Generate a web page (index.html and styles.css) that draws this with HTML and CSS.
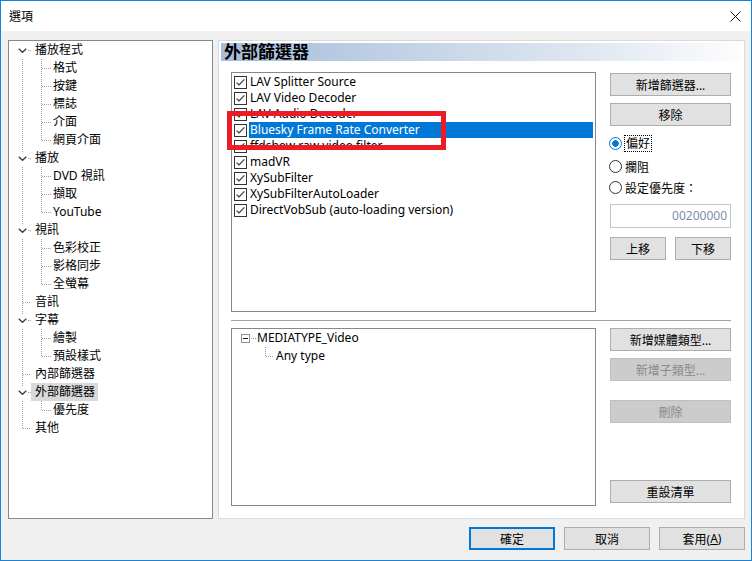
FILE: index.html
```html
<!DOCTYPE html>
<html lang="zh-Hant">
<head>
    <meta charset="UTF-8">
    <title>選項</title>
    <link rel="stylesheet" href="styles.css">
</head>
<body>
    <svg class="sprite" aria-hidden="true">
        <symbol id="chk" viewBox="0 0 13 13">
            <rect x="0.5" y="0.5" width="12" height="12" fill="#fff" stroke="#333"/>
            <path d="M2.6 6.6 L5 9 L10.4 3.4" fill="none" stroke="#333" stroke-width="1.1"/>
        </symbol>
        <symbol id="chev" viewBox="0 0 9 5">
            <path d="M0.7 0.7 L4.5 4.3 L8.3 0.7" fill="none" stroke="#404040" stroke-width="1.4"/>
        </symbol>
    </svg>

    <div class="window">
        <div class="titlebar">
            <span class="title">選項</span>
            <svg class="close" width="11" height="11" viewBox="0 0 11 11">
                <path d="M0.5 0.5 L10.5 10.5 M10.5 0.5 L0.5 10.5" stroke="#111" stroke-width="1"/>
            </svg>
        </div>

        <div class="main">
            <div class="tree">
                <div class="row"><span class="g open first"><svg class="chev"><use href="#chev"/></svg></span><span class="lbl">播放程式</span></div>
                <div class="row"><span class="g pass"></span><span class="g2 tee"></span><span class="lbl sub">格式</span></div>
                <div class="row"><span class="g pass"></span><span class="g2 tee"></span><span class="lbl sub">按鍵</span></div>
                <div class="row"><span class="g pass"></span><span class="g2 tee"></span><span class="lbl sub">標誌</span></div>
                <div class="row"><span class="g pass"></span><span class="g2 tee"></span><span class="lbl sub">介面</span></div>
                <div class="row"><span class="g pass"></span><span class="g2 last"></span><span class="lbl sub">網頁介面</span></div>
                <div class="row"><span class="g open"><svg class="chev"><use href="#chev"/></svg></span><span class="lbl">播放</span></div>
                <div class="row"><span class="g pass"></span><span class="g2 tee"></span><span class="lbl sub">DVD 視訊</span></div>
                <div class="row"><span class="g pass"></span><span class="g2 tee"></span><span class="lbl sub">擷取</span></div>
                <div class="row"><span class="g pass"></span><span class="g2 last"></span><span class="lbl sub">YouTube</span></div>
                <div class="row"><span class="g open"><svg class="chev"><use href="#chev"/></svg></span><span class="lbl">視訊</span></div>
                <div class="row"><span class="g pass"></span><span class="g2 tee"></span><span class="lbl sub">色彩校正</span></div>
                <div class="row"><span class="g pass"></span><span class="g2 tee"></span><span class="lbl sub">影格同步</span></div>
                <div class="row"><span class="g pass"></span><span class="g2 last"></span><span class="lbl sub">全螢幕</span></div>
                <div class="row"><span class="g leaf"></span><span class="lbl">音訊</span></div>
                <div class="row"><span class="g open"><svg class="chev"><use href="#chev"/></svg></span><span class="lbl">字幕</span></div>
                <div class="row"><span class="g pass"></span><span class="g2 tee"></span><span class="lbl sub">繪製</span></div>
                <div class="row"><span class="g pass"></span><span class="g2 last"></span><span class="lbl sub">預設樣式</span></div>
                <div class="row"><span class="g leaf"></span><span class="lbl">內部篩選器</span></div>
                <div class="row"><span class="g open"><svg class="chev"><use href="#chev"/></svg></span><span class="lbl sel">外部篩選器</span></div>
                <div class="row"><span class="g pass"></span><span class="g2 last"></span><span class="lbl sub">優先度</span></div>
                <div class="row"><span class="g end"></span><span class="lbl">其他</span></div>
            </div>

            <div class="page">
                <div class="page-header">外部篩選器</div>

                <div class="section filters">
                    <div class="listbox">
                        <div class="item"><svg class="cb"><use href="#chk"/></svg><span class="txt">LAV Splitter Source</span></div>
                        <div class="item"><svg class="cb"><use href="#chk"/></svg><span class="txt">LAV Video Decoder</span></div>
                        <div class="item"><svg class="cb"><use href="#chk"/></svg><span class="txt">LAV Audio Decoder</span></div>
                        <div class="item sel"><svg class="cb"><use href="#chk"/></svg><span class="txt">Bluesky Frame Rate Converter</span></div>
                        <div class="item"><svg class="cb"><use href="#chk"/></svg><span class="txt">ffdshow raw video filter</span></div>
                        <div class="item"><svg class="cb"><use href="#chk"/></svg><span class="txt">madVR</span></div>
                        <div class="item"><svg class="cb"><use href="#chk"/></svg><span class="txt">XySubFilter</span></div>
                        <div class="item"><svg class="cb"><use href="#chk"/></svg><span class="txt">XySubFilterAutoLoader</span></div>
                        <div class="item"><svg class="cb"><use href="#chk"/></svg><span class="txt">DirectVobSub (auto-loading version)</span></div>
                    </div>
                    <div class="side">
                        <button class="btn first">新增篩選器...</button>
                        <button class="btn gap7">移除</button>
                        <div class="radio r1"><span class="rb on"></span><span class="focus">偏好</span></div>
                        <div class="radio r2"><span class="rb"></span><span>攔阻</span></div>
                        <div class="radio r3"><span class="rb"></span><span>設定優先度：</span></div>
                        <div class="num">00200000</div>
                        <div class="updown">
                            <button class="btn half">上移</button>
                            <button class="btn half">下移</button>
                        </div>
                    </div>
                    <div class="mark"></div>
                </div>

                <div class="sep"></div>

                <div class="section media">
                    <div class="listbox mediabox">
                        <div class="mrow"><svg class="pm" width="9" height="9" viewBox="0 0 9 9"><rect x="0.5" y="0.5" width="8" height="8" fill="#fff" stroke="#919191"/><path d="M2 4.5 H7" stroke="#1e1e1e"/></svg><span class="hdot"></span><span>MEDIATYPE_Video</span></div>
                        <div class="mrow"><span class="conn"></span><span class="sub2">Any type</span></div>
                    </div>
                    <div class="side">
                        <button class="btn">新增媒體類型...</button>
                        <button class="btn gap7" disabled>新增子類型...</button>
                        <button class="btn gap19" disabled>刪除</button>
                        <button class="btn reset">重設清單</button>
                    </div>
                </div>
            </div>
        </div>

        <div class="footer">
            <button class="btn wide default">確定</button>
            <button class="btn wide">取消</button>
            <button class="btn wide">套用(<u>A</u>)</button>
        </div>
    </div>
</body>
</html>
```

FILE: styles.css
```css
:root {
    --v: repeating-linear-gradient(to bottom, #a0a0a0 0 1px, transparent 1px 2px);
    --h: repeating-linear-gradient(to right, #a0a0a0 0 1px, transparent 1px 2px);
}
body {
    margin: 0;
    font-family: "Noto Sans", "Noto Sans CJK TC", sans-serif;
    font-size: 12px;
    color: #000;
}
.sprite {
    display: none;
}
.window {
    width: 752px;
    height: 561px;
    box-sizing: border-box;
    border: 1px solid #1883d7;
    background-color: #f0f0f0;
    display: flex;
    flex-direction: column;
}
.titlebar {
    height: 30px;
    background-color: #fff;
    display: flex;
    align-items: center;
    padding: 0 10px 0 8px;
}
.title {
    flex: 1;
}
.main {
    display: flex;
    gap: 5px;
    margin: 9px 6px 0 7px;
    height: 479px;
}

/* tree */
.tree {
    width: 205px;
    box-sizing: border-box;
    border: 1px solid #828790;
    background-color: #fff;
}
.row {
    display: flex;
    align-items: center;
    height: 18px;
    line-height: 18px;
    white-space: nowrap;
}
.g {
    width: 22px;
    height: 18px;
    flex: none;
    display: flex;
    align-items: center;
}
.g.pass {
    background: var(--v) 13px 0 / 1px 18px no-repeat;
}
.g.leaf {
    background: var(--v) 13px 0 / 1px 18px no-repeat, var(--h) 14px 9px / 8px 1px no-repeat;
}
.g.end {
    background: var(--v) 13px 0 / 1px 9px no-repeat, var(--h) 14px 9px / 8px 1px no-repeat;
}
.g.open {
    background: var(--v) 13px 0 / 1px 4px no-repeat, var(--h) 19px 9px / 3px 1px no-repeat;
}
.g.open.first {
    background: var(--h) 19px 9px / 3px 1px no-repeat;
}
.chev {
    width: 9px;
    height: 5px;
    margin: 1px 0 0 9px;
}
.g2 {
    width: 20px;
    height: 18px;
    flex: none;
}
.g2.tee {
    background: var(--v) 10px 0 / 1px 18px no-repeat, var(--h) 11px 9px / 9px 1px no-repeat;
}
.g2.last {
    background: var(--v) 10px 0 / 1px 9px no-repeat, var(--h) 11px 9px / 9px 1px no-repeat;
}
.lbl {
    padding: 0 3px 0 4px;
}
.lbl.sub {
    padding-left: 2px;
}
.lbl.sel {
    background-color: #d9d9d9;
}

/* page */
.page {
    width: 527px;
    box-sizing: border-box;
    border: 1px solid #dadada;
    background-color: #fff;
    display: flex;
    flex-direction: column;
}
.page-header {
    margin: 2px 2px 0 2px;
    height: 18px;
    line-height: 18px;
    padding-left: 3px;
    font-size: 17px;
    font-weight: bold;
    background: linear-gradient(to right, #a5bdda, #dfe7f1 70%, #fdfdfe);
}
.section {
    display: flex;
    padding-left: 12px;
}
.filters {
    position: relative;
    margin-top: 11px;
}
.listbox {
    width: 365px;
    height: 240px;
    box-sizing: border-box;
    border: 1px solid #828790;
    padding: 1px 1px 1px 0;
    background-color: #fff;
}
.item {
    display: flex;
    align-items: center;
    height: 16px;
    white-space: nowrap;
}
.cb {
    width: 13px;
    height: 13px;
    flex: none;
    margin: 0 2px;
}
.txt {
    flex: 1;
    line-height: 16px;
    padding-left: 1px;
    margin-right: 1px;
}
.item.sel .txt {
    background-color: #0078d7;
    color: #fff;
}
.mark {
    position: absolute;
    left: 8px;
    top: 39px;
    width: 219px;
    height: 39px;
    box-sizing: border-box;
    border: 5px solid #ed1c24;
}
.side {
    width: 121px;
    margin-left: 14px;
    display: flex;
    flex-direction: column;
}
.btn {
    height: 23px;
    box-sizing: border-box;
    border: 1px solid #adadad;
    background-color: #e1e1e1;
    font: inherit;
    color: #000;
    padding: 0;
    display: flex;
    align-items: center;
    justify-content: center;
}
.btn:disabled {
    background-color: #cccccc;
    border-color: #bfbfbf;
    color: #8a8a8a;
}
.btn.first {
    margin-top: 1px;
}
.btn.gap7 {
    margin-top: 7px;
}
.btn.gap19 {
    margin-top: 19px;
}
.btn.reset {
    margin-top: 57px;
}
.radio {
    display: flex;
    align-items: center;
    height: 17px;
}
.radio.r1 {
    margin-top: 9px;
}
.radio.r2 {
    margin-top: 6px;
}
.radio.r3 {
    margin-top: 4px;
}
.rb {
    width: 13px;
    height: 13px;
    box-sizing: border-box;
    border: 1px solid #333;
    border-radius: 50%;
    background-color: #fff;
    margin: 0 3px 0 -1px;
}
.rb.on {
    border-color: #0078d7;
    background: radial-gradient(circle, #0078d7 0 3px, #fff 3.6px);
}
.focus {
    outline: 1px dotted #000;
    outline-offset: 0;
    padding: 0 1px;
    line-height: 15px;
}
.num {
    margin-top: 8px;
    height: 24px;
    box-sizing: border-box;
    border: 1px solid #c4c4c4;
    text-align: right;
    padding-right: 3px;
    line-height: 22px;
    color: #7b8ea9;
}
.updown {
    display: flex;
    justify-content: space-between;
    margin-top: 9px;
}
.btn.half {
    width: 56px;
}
.sep {
    height: 1px;
    width: 500px;
    margin: 8px 0 0 12px;
    background-color: #a0a0a0;
}
.media {
    margin-top: 7px;
}
.mediabox {
    height: 178px;
    padding: 0;
}
.mrow {
    display: flex;
    align-items: center;
    height: 18px;
    line-height: 18px;
    white-space: nowrap;
}
.pm {
    flex: none;
    margin-left: 9px;
}
.hdot {
    width: 7px;
    height: 18px;
    flex: none;
    background: var(--h) 1px 9px / 6px 1px no-repeat;
}
.conn {
    width: 42px;
    height: 18px;
    flex: none;
    background: var(--v) 33px 0 / 1px 10px no-repeat, var(--h) 34px 9px / 8px 1px no-repeat;
}
.sub2 {
    padding-left: 2px;
}

/* footer */
.footer {
    display: flex;
    justify-content: flex-end;
    gap: 9px;
    margin: 8px 6px 0 0;
}
.btn.wide {
    width: 86px;
}
.btn.default {
    border: 2px solid #0078d7;
}
```
